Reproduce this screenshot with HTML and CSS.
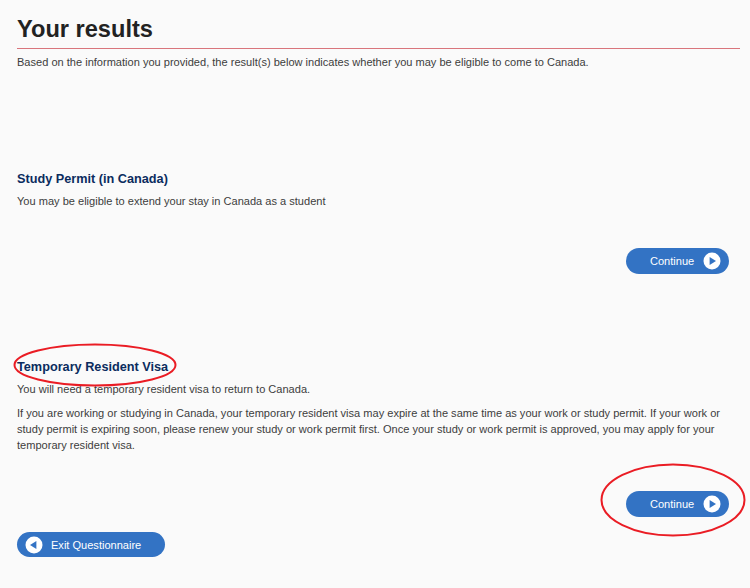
FILE: index.html
```html
<!DOCTYPE html>
<html lang="en">
<head>
<meta charset="utf-8">
<title>Your results</title>
<link rel="stylesheet" href="styles.css">
</head>
<body>
<main class="page">
  <h1 class="title">Your results</h1>
  <p class="intro">Based on the information you provided, the result(s) below indicates whether you may be eligible to come to Canada.</p>

  <section class="result result-study">
    <h2 class="result-title">Study Permit (in Canada)</h2>
    <p class="text">You may be eligible to extend your stay in Canada as a student</p>
    <div class="actions actions-study">
      <a class="btn btn-continue" href="#">Continue
        <svg class="btn-icon" viewBox="0 0 18 18" aria-hidden="true"><circle cx="9" cy="9" r="8.5" fill="#fff"/><path d="M6.6 4.9 13 9l-6.4 4.1z" fill="#3373c4"/></svg>
      </a>
    </div>
  </section>

  <section class="result result-visa">
    <h2 class="result-title">Temporary Resident Visa</h2>
    <p class="text">You will need a temporary resident visa to return to Canada.</p>
    <p class="text text-long">If you are working or studying in Canada, your temporary resident visa may expire at the same time as your work or study permit. If your work or study permit is expiring soon, please renew your study or work permit first. Once your study or work permit is approved, you may apply for your temporary resident visa.</p>
    <div class="actions actions-visa">
      <a class="btn btn-continue" href="#">Continue
        <svg class="btn-icon" viewBox="0 0 18 18" aria-hidden="true"><circle cx="9" cy="9" r="8.5" fill="#fff"/><path d="M6.6 4.9 13 9l-6.4 4.1z" fill="#3373c4"/></svg>
      </a>
    </div>
  </section>

  <a class="btn btn-exit" href="#">
    <svg class="btn-icon" viewBox="0 0 18 18" aria-hidden="true"><circle cx="9" cy="9" r="8.5" fill="#fff"/><path d="M11.4 4.9 5 9l6.4 4.1z" fill="#3373c4"/></svg>
    Exit Questionnaire
  </a>
</main>

<svg class="ring ring-title" viewBox="0 0 164 44" aria-hidden="true"><ellipse cx="82" cy="22" rx="80.5" ry="20.5"/></svg>
<svg class="ring ring-button" viewBox="0 0 146 74" aria-hidden="true"><ellipse cx="73" cy="37" rx="71.5" ry="35.5"/></svg>
</body>
</html>
```

FILE: styles.css
```css
html, body {
  margin: 0;
  padding: 0;
  background: #fafafa;
}

body {
  position: relative;
  height: 588px;
  overflow: hidden;
  font-family: "Liberation Sans", Arial, sans-serif;
  font-size: 11.05px;
  color: #3d3d3d;
}

.page {
  display: flex;
  flex-direction: column;
  align-items: stretch;
  padding: 15px 10px 0 17px;
}

.title {
  margin: 0;
  padding-bottom: 4px;
  border-bottom: 1px solid #d9757c;
  font-size: 23.6px;
  line-height: 29px;
  font-weight: bold;
  color: #222;
}

.intro {
  margin: 6px 0 0;
  line-height: 14px;
}

.result-title {
  margin: 0;
  font-size: 12.7px;
  line-height: 15px;
  font-weight: bold;
  color: #0b2c5e;
}

.text {
  margin: 7px 0 0;
  line-height: 14px;
}

.text-long {
  margin-top: 9px;
  line-height: 16px;
}

.result-study {
  margin-top: 103px;
}

.result-visa {
  margin-top: 86px;
}

.actions {
  display: flex;
  justify-content: flex-end;
  padding-right: 11px;
}

.actions-study {
  margin-top: 40px;
}

.actions-visa {
  margin-top: 38px;
}

.btn {
  display: inline-flex;
  align-items: center;
  box-sizing: border-box;
  height: 26px;
  border-radius: 13px;
  background: #3373c4;
  color: #fff;
  font-size: 11.05px;
  text-decoration: none;
}

.btn-continue {
  width: 103px;
  padding: 0 8px 0 24px;
  justify-content: space-between;
}

.btn-exit {
  align-self: flex-start;
  width: 148px;
  height: 25px;
  margin-top: 15px;
  padding-left: 8px;
  gap: 8px;
}

.btn-icon {
  flex: none;
  width: 18px;
  height: 18px;
}

.ring {
  position: absolute;
  fill: none;
  stroke: #ea1c24;
  stroke-width: 2;
}

.ring-title {
  left: 13px;
  top: 343px;
  width: 164px;
  height: 44px;
}

.ring-button {
  left: 600px;
  top: 463px;
  width: 146px;
  height: 74px;
}
```
